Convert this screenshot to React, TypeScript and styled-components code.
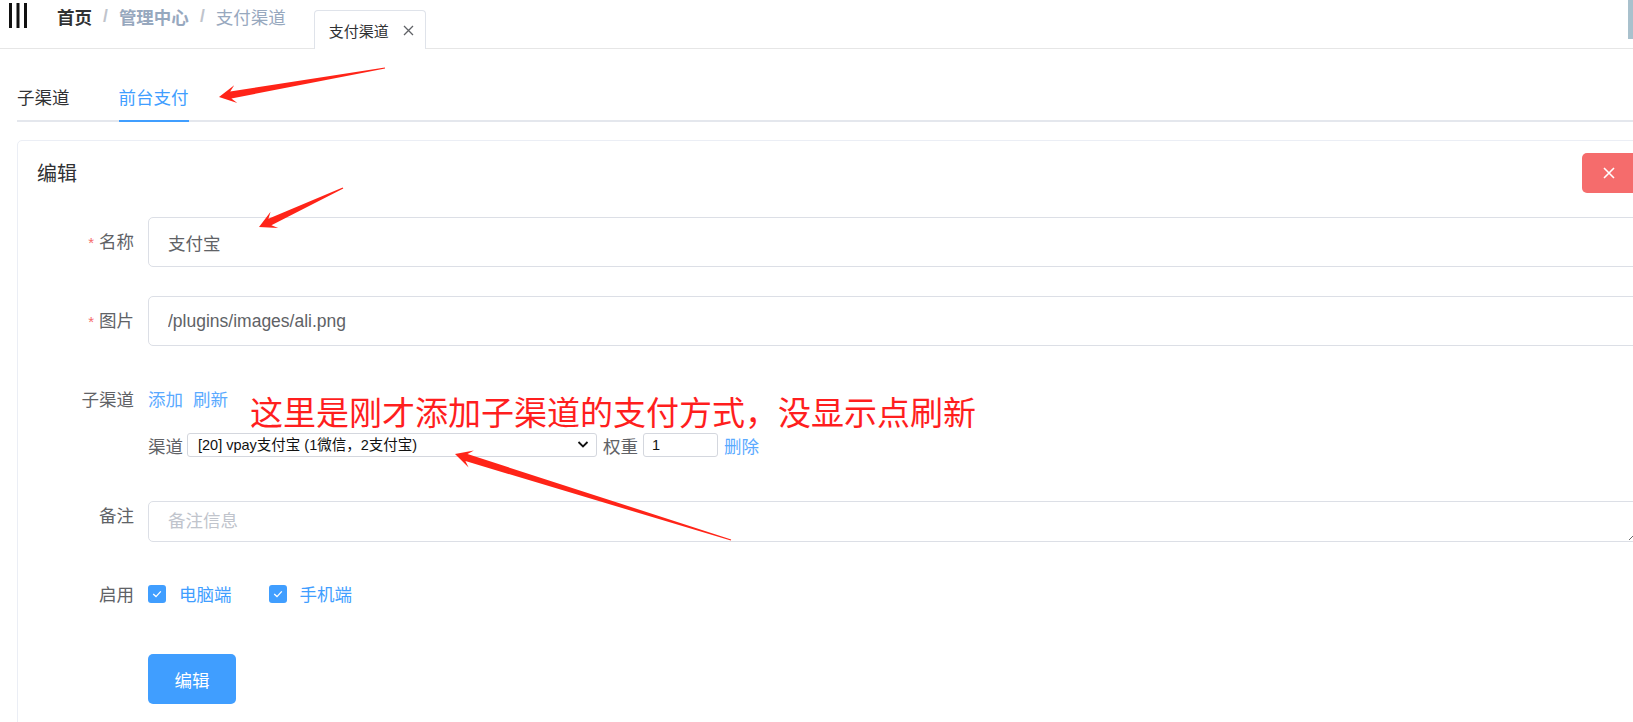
import React from "react";
import styled, { createGlobalStyle } from "styled-components";

const GlobalStyle = createGlobalStyle`
  html, body {
    margin: 0;
    padding: 0;
    overflow: hidden;
    background: #ffffff;
    font-family: "Liberation Sans", Arial, "Noto Sans CJK SC", sans-serif;
    color: #606266;
  }
  * { box-sizing: border-box; }
`;

const Page = styled.div`
  position: relative;
  width: 1675px;
  min-height: 722px;
`;

const Header = styled.header`
  display: flex;
  align-items: flex-start;
  height: 49px;
  border-bottom: 1px solid #e6e6e6;
  width: 1633px;
`;

const Hamburger = styled.div`
  display: flex;
  margin: 3px 0 0 9px;
  height: 25px;
  color: #111;
`;

const Breadcrumb = styled.nav`
  display: flex;
  align-items: center;
  height: 33px;
  margin-left: 28px;
  font-size: 17.5px;
`;

const Crumb = styled.span<{ $bold?: boolean; $dark?: boolean }>`
  font-weight: ${(p) => (p.$bold ? 700 : 400)};
  color: ${(p) => (p.$dark ? "#303133" : "#97a8be")};
`;

const Sep = styled.span`
  color: #c0c4cc;
  margin: 0 11px;
  font-weight: 700;
`;

const TagTab = styled.div`
  display: flex;
  align-items: center;
  height: 39px;
  margin: 10px 0 0 28px;
  padding: 0 11px 0 14px;
  border: 1px solid #dfe3ea;
  border-bottom: none;
  border-radius: 4px 4px 0 0;
  font-size: 15px;
  color: #303133;
  background: #fff;
`;

const TagClose = styled.span`
  display: inline-flex;
  margin-left: 14px;
  color: #606266;
`;

const ScrollThumb = styled.div`
  position: absolute;
  top: 0;
  left: 1628px;
  width: 5px;
  height: 39px;
  background: #a9c1cd;
`;

const Main = styled.main`
  padding: 24px 17px 0 17px;
`;

const TabsNav = styled.div`
  display: flex;
  gap: 49px;
  border-bottom: 2px solid #e4e7ed;
`;

const TabItem = styled.div<{ $active?: boolean }>`
  height: 49px;
  line-height: 50px;
  margin-bottom: -2px;
  font-size: 17.5px;
  color: ${(p) => (p.$active ? "#409eff" : "#303133")};
  border-bottom: 2px solid ${(p) => (p.$active ? "#409eff" : "transparent")};
`;

const Card = styled.section`
  margin-top: 18px;
  border: 1px solid #ebeef5;
  border-radius: 5px;
  padding: 12px 19px 40px 19px;
`;

const CardHeader = styled.div`
  display: flex;
  justify-content: space-between;
  align-items: center;
  height: 40px;
`;

const CardTitle = styled.h2`
  margin: 0 0 2px 0;
  font-size: 20px;
  font-weight: 400;
  color: #303133;
`;

const DangerButton = styled.button`
  width: 56px;
  height: 40px;
  border: none;
  border-radius: 5px;
  background: #f56c6c;
  color: #fff;
  display: flex;
  align-items: center;
  justify-content: center;
  padding: 0 2px 0 0;
`;

const Form = styled.form`
  margin-top: 24px;
`;

const FormItem = styled.div<{ $mb?: number }>`
  display: flex;
  align-items: flex-start;
  margin-bottom: ${(p) => p.$mb ?? 28}px;
`;

const Label = styled.label<{ $lh?: number }>`
  width: 111px;
  flex: none;
  padding-right: 14px;
  text-align: right;
  font-size: 17.5px;
  line-height: ${(p) => p.$lh ?? 50}px;
  color: #606266;
`;

const Star = styled.span`
  color: #f56c6c;
  margin-right: 5px;
  font-size: 15px;
`;

const TextInput = styled.input`
  flex: 1;
  height: 50px;
  border: 1px solid #dcdfe6;
  border-radius: 5px;
  padding: 0 19px;
  font-size: 17.5px;
  font-family: inherit;
  color: #606266;
  outline: none;
`;

const TextArea = styled.textarea`
  flex: 1;
  height: 41px;
  border: 1px solid #dcdfe6;
  border-radius: 5px;
  padding: 6px 19px;
  font-size: 17.5px;
  line-height: 26px;
  font-family: inherit;
  color: #606266;
  outline: none;
  resize: vertical;
  &::placeholder { color: #c0c4cc; }
`;

const Column = styled.div`
  display: flex;
  flex-direction: column;
`;

const LinkLine = styled.div`
  display: flex;
  gap: 10px;
  height: 50px;
  line-height: 50px;
`;

const LinkText = styled.a<{ $ml?: number }>`
  color: #5aaaff;
  font-size: 17.5px;
  text-decoration: none;
  cursor: pointer;
  margin-left: ${(p) => p.$ml ?? 0}px;
`;

const ChannelRow = styled.div`
  display: flex;
  align-items: center;
  height: 24px;
  margin-top: 8px;
  margin-bottom: 44px;
`;

const RowText = styled.span<{ $ml?: number; $mr?: number }>`
  font-size: 17.5px;
  color: #606266;
  margin-left: ${(p) => p.$ml ?? 0}px;
  margin-right: ${(p) => p.$mr ?? 0}px;
  white-space: nowrap;
`;

const SelectWrap = styled.div`
  position: relative;
  width: 410px;
  height: 24px;
`;

const NativeSelect = styled.select`
  appearance: none;
  width: 100%;
  height: 24px;
  border: 1px solid #d4d7de;
  border-radius: 3px;
  background: #fff;
  padding: 0 24px 0 10px;
  font-size: 14.5px;
  font-family: "Liberation Sans", Arial, "Noto Sans CJK SC", sans-serif;
  color: #111;
  outline: none;
`;

const Chevron = styled.span`
  position: absolute;
  right: 8px;
  top: 7px;
  display: flex;
  pointer-events: none;
`;

const SmallInput = styled.input`
  width: 75px;
  height: 24px;
  border: 1px solid #d4d7de;
  border-radius: 3px;
  padding: 0 8px;
  font-size: 14.5px;
  font-family: inherit;
  color: #111;
  outline: none;
`;

const CheckGroup = styled.div`
  display: flex;
  align-items: center;
  height: 47px;
  margin-bottom: 3px;
  gap: 37px;
`;

const CheckItem = styled.label`
  display: flex;
  align-items: center;
  gap: 13px;
  font-size: 17.5px;
  color: #409eff;
`;

const CheckBox = styled.span`
  width: 18px;
  height: 18px;
  border-radius: 3px;
  background: #409eff;
  display: flex;
  align-items: center;
  justify-content: center;
`;

const PrimaryButton = styled.button`
  margin-left: 111px;
  width: 88px;
  height: 50px;
  border: none;
  border-radius: 5px;
  background: #409eff;
  color: #fff;
  font-size: 17.5px;
  font-family: inherit;
`;

const Annotation = styled.div`
  position: absolute;
  left: 250px;
  top: 389px;
  font-size: 33px;
  line-height: 44px;
  color: #ff1e1e;
  font-family: "Noto Sans CJK SC", sans-serif;
  white-space: nowrap;
  pointer-events: none;
`;

const ArrowLayer = styled.svg`
  position: absolute;
  left: 0;
  top: 0;
  pointer-events: none;
`;

type Pt = [number, number];

function arrowPoints(T: Pt, P: Pt): string {
  const dx = P[0] - T[0];
  const dy = P[1] - T[1];
  const len = Math.hypot(dx, dy);
  const d: Pt = [dx / len, dy / len];
  const n: Pt = [-d[1], d[0]];
  const headLen = 17;
  const headHalf = 9;
  const neckBack = 12;
  const neckHalf = 3.6;
  const tailHalf = 0.6;
  const at = (base: Pt, back: number, side: number): Pt => [
    base[0] - d[0] * back + n[0] * side,
    base[1] - d[1] * back + n[1] * side,
  ];
  const pts: Pt[] = [
    at(T, 0, tailHalf),
    at(P, neckBack, neckHalf),
    at(P, headLen, headHalf),
    P,
    at(P, headLen, -headHalf),
    at(P, neckBack, -neckHalf),
    at(T, 0, -tailHalf),
  ];
  return pts.map((p) => `${p[0].toFixed(1)},${p[1].toFixed(1)}`).join(" ");
}

const arrows: Array<[Pt, Pt]> = [
  [[385, 68], [219, 97]],
  [[343, 188], [259, 227]],
  [[731, 540], [455, 454]],
];

const CheckMark = () => (
  <svg width="10" height="8" viewBox="0 0 10 8">
    <path d="M1.2 4 L4 6.6 L8.8 1.4" stroke="#fff" strokeWidth="1.3" fill="none" />
  </svg>
);

export default function App() {
  return (
    <>
      <GlobalStyle />
      <Page>
        <Header>
          <Hamburger>
            <svg width="20" height="25" viewBox="0 0 20 25">
              <rect x="0" y="0" width="3" height="25" fill="#111" />
              <rect x="7.5" y="0" width="3" height="25" fill="#111" />
              <rect x="15" y="0" width="3" height="25" fill="#111" />
            </svg>
          </Hamburger>
          <Breadcrumb>
            <Crumb $bold $dark>首页</Crumb>
            <Sep>/</Sep>
            <Crumb $bold>管理中心</Crumb>
            <Sep>/</Sep>
            <Crumb>支付渠道</Crumb>
          </Breadcrumb>
          <TagTab>
            支付渠道
            <TagClose>
              <svg width="11" height="11" viewBox="0 0 11 11">
                <path d="M1 1 L10 10 M10 1 L1 10" stroke="#606266" strokeWidth="1.3" />
              </svg>
            </TagClose>
          </TagTab>
        </Header>
        <ScrollThumb />
        <Main>
          <TabsNav>
            <TabItem>子渠道</TabItem>
            <TabItem $active>前台支付</TabItem>
          </TabsNav>
          <Card>
            <CardHeader>
              <CardTitle>编辑</CardTitle>
              <DangerButton type="button">
                <svg width="12" height="12" viewBox="0 0 12 12">
                  <path d="M1 1 L11 11 M11 1 L1 11" stroke="#fff" strokeWidth="1.6" />
                </svg>
              </DangerButton>
            </CardHeader>
            <Form>
              <FormItem>
                <Label><Star>*</Star>名称</Label>
                <TextInput defaultValue="支付宝" />
              </FormItem>
              <FormItem>
                <Label><Star>*</Star>图片</Label>
                <TextInput defaultValue="/plugins/images/ali.png" />
              </FormItem>
              <FormItem $mb={0}>
                <Label>子渠道</Label>
                <Column>
                  <LinkLine>
                    <LinkText>添加</LinkText>
                    <LinkText>刷新</LinkText>
                  </LinkLine>
                  <ChannelRow>
                    <RowText $mr={4}>渠道</RowText>
                    <SelectWrap>
                      <NativeSelect defaultValue="20">
                        <option value="20">[20] vpay支付宝 (1微信，2支付宝)</option>
                      </NativeSelect>
                      <Chevron>
                        <svg width="12" height="9" viewBox="0 0 12 9">
                          <path d="M1.5 2 L6 6.5 L10.5 2" stroke="#111" strokeWidth="1.8" fill="none" />
                        </svg>
                      </Chevron>
                    </SelectWrap>
                    <RowText $ml={6} $mr={5}>权重</RowText>
                    <SmallInput defaultValue="1" />
                    <LinkText $ml={6}>删除</LinkText>
                  </ChannelRow>
                </Column>
              </FormItem>
              <FormItem>
                <Label $lh={31}>备注</Label>
                <TextArea placeholder="备注信息" rows={1} />
              </FormItem>
              <FormItem $mb={34}>
                <Label>启用</Label>
                <CheckGroup>
                  <CheckItem>
                    <CheckBox><CheckMark /></CheckBox>
                    电脑端
                  </CheckItem>
                  <CheckItem>
                    <CheckBox><CheckMark /></CheckBox>
                    手机端
                  </CheckItem>
                </CheckGroup>
              </FormItem>
              <PrimaryButton type="button">编辑</PrimaryButton>
            </Form>
          </Card>
        </Main>
        <Annotation>这里是刚才添加子渠道的支付方式，没显示点刷新</Annotation>
        <ArrowLayer width="1633" height="722" viewBox="0 0 1633 722">
          {arrows.map(([t, p], i) => (
            <polygon key={i} points={arrowPoints(t, p)} fill="#ff2418" />
          ))}
        </ArrowLayer>
      </Page>
    </>
  );
}
